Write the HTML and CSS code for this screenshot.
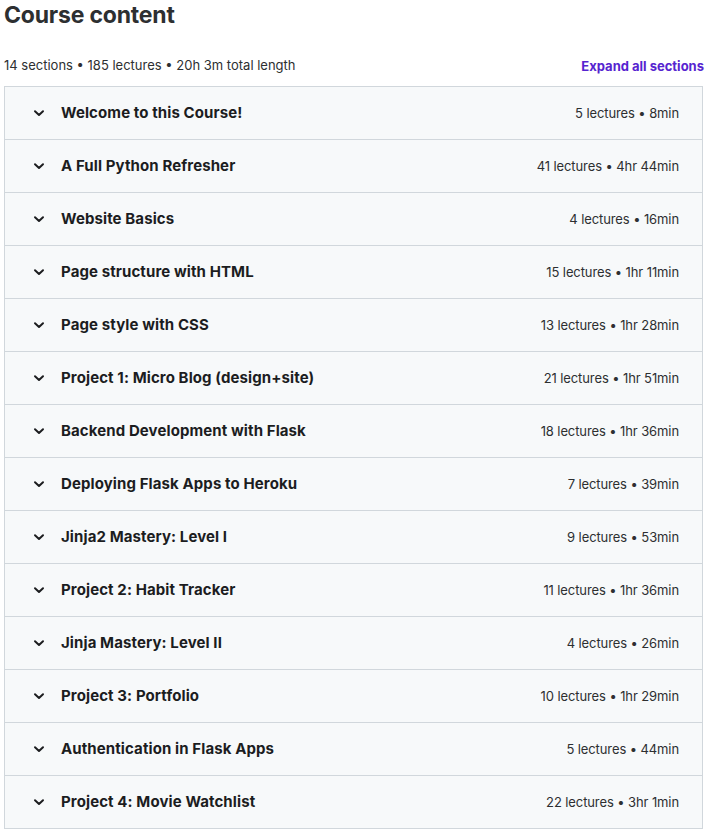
FILE: index.html
```html
<!DOCTYPE html>
<html lang="en">
<head>
    <meta charset="UTF-8">
    <meta name="viewport" content="width=device-width, initial-scale=1.0">
    <title>Course content</title>
    <link rel="stylesheet" href="styles.css">
</head>
<body>

    <div class="curriculum">
        <h2 class="title">Course content</h2>

        <div class="summary">
            <span>14 sections &bull; 185 lectures &bull; 20h 3m total length</span>
            <button class="expand-all">Expand all sections</button>
        </div>

        <div class="sections">
            <div class="section">
                <svg class="chevron" viewBox="0 0 16 16"><path d="M4 6.3 L8 10 L12 6.3" /></svg>
                <span class="section-name">Welcome to this Course!</span>
                <span class="section-meta">5 lectures &bull; 8min</span>
            </div>
            <div class="section">
                <svg class="chevron" viewBox="0 0 16 16"><path d="M4 6.3 L8 10 L12 6.3" /></svg>
                <span class="section-name">A Full Python Refresher</span>
                <span class="section-meta">41 lectures &bull; 4hr 44min</span>
            </div>
            <div class="section">
                <svg class="chevron" viewBox="0 0 16 16"><path d="M4 6.3 L8 10 L12 6.3" /></svg>
                <span class="section-name">Website Basics</span>
                <span class="section-meta">4 lectures &bull; 16min</span>
            </div>
            <div class="section">
                <svg class="chevron" viewBox="0 0 16 16"><path d="M4 6.3 L8 10 L12 6.3" /></svg>
                <span class="section-name">Page structure with HTML</span>
                <span class="section-meta">15 lectures &bull; 1hr 11min</span>
            </div>
            <div class="section">
                <svg class="chevron" viewBox="0 0 16 16"><path d="M4 6.3 L8 10 L12 6.3" /></svg>
                <span class="section-name">Page style with CSS</span>
                <span class="section-meta">13 lectures &bull; 1hr 28min</span>
            </div>
            <div class="section">
                <svg class="chevron" viewBox="0 0 16 16"><path d="M4 6.3 L8 10 L12 6.3" /></svg>
                <span class="section-name">Project 1: Micro Blog (design+site)</span>
                <span class="section-meta">21 lectures &bull; 1hr 51min</span>
            </div>
            <div class="section">
                <svg class="chevron" viewBox="0 0 16 16"><path d="M4 6.3 L8 10 L12 6.3" /></svg>
                <span class="section-name">Backend Development with Flask</span>
                <span class="section-meta">18 lectures &bull; 1hr 36min</span>
            </div>
            <div class="section">
                <svg class="chevron" viewBox="0 0 16 16"><path d="M4 6.3 L8 10 L12 6.3" /></svg>
                <span class="section-name">Deploying Flask Apps to Heroku</span>
                <span class="section-meta">7 lectures &bull; 39min</span>
            </div>
            <div class="section">
                <svg class="chevron" viewBox="0 0 16 16"><path d="M4 6.3 L8 10 L12 6.3" /></svg>
                <span class="section-name">Jinja2 Mastery: Level I</span>
                <span class="section-meta">9 lectures &bull; 53min</span>
            </div>
            <div class="section">
                <svg class="chevron" viewBox="0 0 16 16"><path d="M4 6.3 L8 10 L12 6.3" /></svg>
                <span class="section-name">Project 2: Habit Tracker</span>
                <span class="section-meta">11 lectures &bull; 1hr 36min</span>
            </div>
            <div class="section">
                <svg class="chevron" viewBox="0 0 16 16"><path d="M4 6.3 L8 10 L12 6.3" /></svg>
                <span class="section-name">Jinja Mastery: Level II</span>
                <span class="section-meta">4 lectures &bull; 26min</span>
            </div>
            <div class="section">
                <svg class="chevron" viewBox="0 0 16 16"><path d="M4 6.3 L8 10 L12 6.3" /></svg>
                <span class="section-name">Project 3: Portfolio</span>
                <span class="section-meta">10 lectures &bull; 1hr 29min</span>
            </div>
            <div class="section">
                <svg class="chevron" viewBox="0 0 16 16"><path d="M4 6.3 L8 10 L12 6.3" /></svg>
                <span class="section-name">Authentication in Flask Apps</span>
                <span class="section-meta">5 lectures &bull; 44min</span>
            </div>
            <div class="section">
                <svg class="chevron" viewBox="0 0 16 16"><path d="M4 6.3 L8 10 L12 6.3" /></svg>
                <span class="section-name">Project 4: Movie Watchlist</span>
                <span class="section-meta">22 lectures &bull; 3hr 1min</span>
            </div>
        </div>
    </div>

</body>
</html>
```

FILE: styles.css
```css
body {
    margin: 0;
    background-color: #ffffff;
    font-family: Inter, "Noto Sans", sans-serif;
    color: #2d2f31;
}

.curriculum {
    padding: 0 4px;
}

.title {
    margin: 0;
    font-size: 23px;
    line-height: 30px;
    font-weight: 700;
    letter-spacing: -0.2px;
}

.summary {
    display: flex;
    justify-content: space-between;
    align-items: center;
    margin-top: 25px;
    height: 20px;
    margin-bottom: 11px;
    font-size: 13px;
}

.expand-all {
    padding: 0;
    border: none;
    background: none;
    font-family: inherit;
    font-size: 13px;
    font-weight: 700;
    color: #5624d0;
    cursor: pointer;
    margin-top: 2px;
    margin-right: -1px;
}

.sections {
    border: 1px solid #d1d7dc;
}

.section {
    display: flex;
    align-items: center;
    height: 51px;
    padding: 0 23px 1px 26px;
    background-color: #f7f9fa;
    border-bottom: 1px solid #d1d7dc;
}

.section:last-child {
    border-bottom: none;
}

.chevron {
    width: 16px;
    height: 16px;
    margin-right: 14px;
    flex-shrink: 0;
}

.chevron path {
    fill: none;
    stroke: #1c1d1f;
    stroke-width: 2;
    stroke-linecap: round;
    stroke-linejoin: round;
}

.section-name {
    flex: 1;
    font-size: 15px;
    font-weight: 700;
    letter-spacing: 0.1px;
    color: #1c1d1f;
}

.section-meta {
    font-size: 13px;
    letter-spacing: -0.1px;
}
```
